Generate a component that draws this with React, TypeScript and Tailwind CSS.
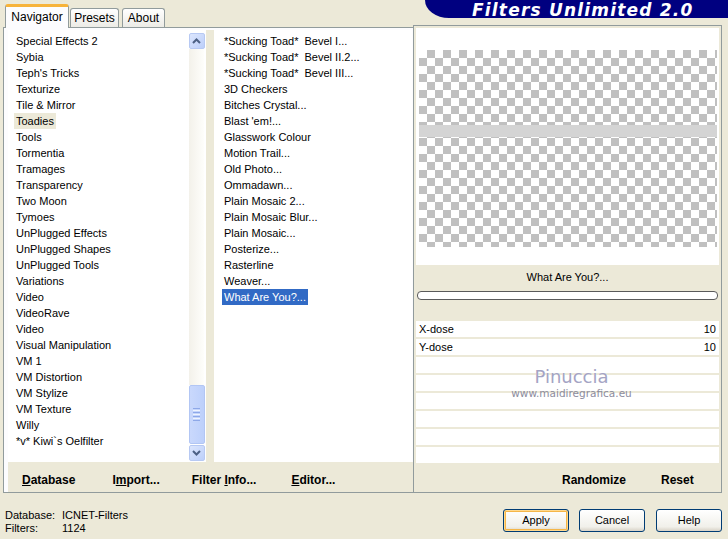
import React from "react";

const leftItems = [
  "Special Effects 2",
  "Sybia",
  "Teph's Tricks",
  "Texturize",
  "Tile & Mirror",
  "Toadies",
  "Tools",
  "Tormentia",
  "Tramages",
  "Transparency",
  "Two Moon",
  "Tymoes",
  "UnPlugged Effects",
  "UnPlugged Shapes",
  "UnPlugged Tools",
  "Variations",
  "Video",
  "VideoRave",
  "Video",
  "Visual Manipulation",
  "VM 1",
  "VM Distortion",
  "VM Stylize",
  "VM Texture",
  "Willy",
  "*v* Kiwi`s Oelfilter",
];

const midItems = [
  "*Sucking Toad*  Bevel I...",
  "*Sucking Toad*  Bevel II.2...",
  "*Sucking Toad*  Bevel III...",
  "3D Checkers",
  "Bitches Crystal...",
  "Blast 'em!...",
  "Glasswork Colour",
  "Motion Trail...",
  "Old Photo...",
  "Ommadawn...",
  "Plain Mosaic 2...",
  "Plain Mosaic Blur...",
  "Plain Mosaic...",
  "Posterize...",
  "Rasterline",
  "Weaver...",
  "What Are You?...",
];

const params: [string, string][] = [
  ["X-dose", "10"],
  ["Y-dose", "10"],
  ["", ""],
  ["", ""],
  ["", ""],
  ["", ""],
  ["", ""],
  ["", ""],
];

function Chevron({ up }: { up: boolean }) {
  return (
    <svg width="9" height="6" viewBox="0 0 9 6">
      <path
        d={up ? "M1 5 L4.5 1.5 L8 5" : "M1 1 L4.5 4.5 L8 1"}
        fill="none"
        stroke="#4D6185"
        strokeWidth="2"
      />
    </svg>
  );
}

function ScrollButton({ up }: { up: boolean }) {
  return (
    <div className="h-[16px] w-[16px] mx-auto flex items-center justify-center rounded-[2px] border border-[#B7C9F3] bg-[linear-gradient(135deg,#DCE6FD,#BCCFFA)]">
      <Chevron up={up} />
    </div>
  );
}

function XPButton({ label, def }: { label: string; def?: boolean }) {
  return (
    <div
      className={
        "w-[66px] h-[23px] flex items-center justify-center rounded-[3px] border border-[#003C74] bg-[linear-gradient(180deg,#FFFFFF,#F1F0EA_80%,#D8D2C6)] text-[11px] " +
        (def ? "shadow-[inset_0_0_0_1px_#FFD98F,inset_0_0_0_2px_#F5B649]" : "")
      }
    >
      {label}
    </div>
  );
}

export default function App() {
  return (
    <div className="w-[728px] h-[539px] bg-[#ECE9D8] font-['Liberation_Sans',Arial,sans-serif] text-[11px] text-black overflow-hidden flex flex-col">
      {/* top strip */}
      <div className="h-[27px] flex justify-between shrink-0">
        <div className="flex items-end pl-[5px]">
          <div className="relative z-10 -mb-[1px] h-[24px] w-[64px] flex items-center justify-center rounded-t-[3px] border-x border-[#919B9C] border-t-[3px] border-t-[#F7B33A] bg-[#FCFCFE] text-[12px] pb-[1px]">
            Navigator
          </div>
          <div className="ml-[1px] h-[19px] w-[49px] flex items-center justify-center rounded-t-[3px] border border-b-0 border-[#919B9C] bg-[linear-gradient(180deg,#FFFFFF,#ECEBE6)] text-[12px]">
            Presets
          </div>
          <div className="ml-[3px] h-[19px] w-[43px] flex items-center justify-center rounded-t-[3px] border border-b-0 border-[#919B9C] bg-[linear-gradient(180deg,#FFFFFF,#ECEBE6)] text-[12px]">
            About
          </div>
        </div>
        <div className="w-[303px] h-[18px] bg-[#000080] rounded-bl-[24px_18px] pl-[47px] pt-[1px] flex items-center font-['DejaVu_Sans',sans-serif] font-bold italic text-[17px] leading-[16px] tracking-[1.2px] text-white whitespace-nowrap">
          Filters Unlimited 2.0
        </div>
      </div>

      {/* main area */}
      <div className="h-[466px] flex pl-[3px] shrink-0">
        {/* left panel */}
        <div className="w-[411px] h-[466px] border border-[#919B9C] bg-[#FCFCFE] flex flex-col">
          <div className="h-[432px] mt-[2px] flex pl-[4px]">
            <div className="w-[180px] bg-white pt-[3px]">
              {leftItems.map((t, i) => (
                <div key={i} className="h-[16px] leading-[16px] flex">
                  <span
                    className={
                      "ml-[6px] px-[2px] whitespace-pre " +
                      (t === "Toadies" ? "bg-[#ECE9D8]" : "")
                    }
                  >
                    {t}
                  </span>
                </div>
              ))}
            </div>
            <div className="w-[18px] bg-white pt-[3px] pb-[1px] flex flex-col pr-[1px]">
              <ScrollButton up />
              <div className="flex-1 mx-[1px] bg-[linear-gradient(90deg,#F3F1EA,#FEFEFB)]" />
              <div className="h-[59px] w-[16px] mx-auto rounded-[2px] border border-[#B2C6F4] bg-[linear-gradient(90deg,#C9D8FC,#BDD0FB)] flex flex-col items-center justify-center gap-[1px]">
                <div className="w-[7px] h-[1px] bg-[#8EA8E8]" />
                <div className="w-[7px] h-[1px] bg-[#EEF3FE]" />
                <div className="w-[7px] h-[1px] bg-[#8EA8E8]" />
                <div className="w-[7px] h-[1px] bg-[#EEF3FE]" />
                <div className="w-[7px] h-[1px] bg-[#8EA8E8]" />
                <div className="w-[7px] h-[1px] bg-[#EEF3FE]" />
                <div className="w-[7px] h-[1px] bg-[#8EA8E8]" />
              </div>
              <div className="h-[1px]" />
              <ScrollButton up={false} />
            </div>
            <div className="w-[8px] bg-[#ECE9D8]" />
            <div className="w-[198px] bg-white pt-[3px]">
              {midItems.map((t, i) => (
                <div key={i} className="h-[16px] leading-[16px] flex">
                  <span
                    className={
                      "ml-[8px] px-[2px] whitespace-pre " +
                      (t === "What Are You?..." ? "bg-[#316AC5] text-white" : "")
                    }
                  >
                    {t}
                  </span>
                </div>
              ))}
            </div>
          </div>
          <div className="h-[30px] ml-[4px] bg-[#ECE9D8] flex items-center font-bold text-[12px] pt-[5px]">
            <span className="ml-[14px]">
              <span className="underline">D</span>atabase
            </span>
            <span className="ml-[37px]">
              I<span className="underline">m</span>port...
            </span>
            <span className="ml-[32px]">
              Filter <span className="underline">I</span>nfo...
            </span>
            <span className="ml-[35px]">
              <span className="underline">E</span>ditor...
            </span>
          </div>
        </div>

        {/* right panel */}
        <div className="relative w-[309px] h-[468px] -mt-[2px] -ml-[1px] border border-[#919B9C] bg-[#ECE9D8] flex flex-col px-[2px] pt-[2px]">
          <div className="h-[237px] bg-white pt-[22px] pl-[3px] pr-[2px]">
            <div className="relative h-[197px] bg-[conic-gradient(#C0C0C0_25%,#FFFFFF_0_50%,#C0C0C0_0_75%,#FFFFFF_0)] bg-[length:16px_16px]">
              <div className="absolute left-0 right-0 top-[75px] h-[12px] bg-[#D4D4D4]" />
            </div>
          </div>
          <div className="h-[56px] flex flex-col items-center pt-[5px]">
            <div className="h-[14px] leading-[14px]">What Are You?...</div>
            <div className="mt-[7px] self-stretch mx-[1px] h-[9px] rounded-[4px] border border-[#5A5A5A] bg-white" />
          </div>
          <div className="flex flex-col gap-[2px]">
            {params.map(([k, v], i) => (
              <div
                key={i}
                className="h-[16px] leading-[16px] bg-white flex justify-between pl-[3px] pr-[3px]"
              >
                <span>{k}</span>
                <span>{v}</span>
              </div>
            ))}
          </div>
          <div className="flex-1 flex items-center font-bold text-[12px] pt-[5px]">
            <span className="ml-[146px]">Randomize</span>
            <span className="ml-[35px]">Reset</span>
          </div>
          {/* watermark */}
          <div className="absolute left-0 right-0 top-[341px] flex flex-col items-center pointer-events-none">
            <div className="font-['DejaVu_Sans',sans-serif] text-[18px] leading-[20px] text-[#A4A4C4] [text-shadow:0_0_1px_#fff] pl-[8px]">
              Pinuccia
            </div>
            <div className="font-['DejaVu_Sans',sans-serif] text-[10.5px] leading-[12px] text-[#8C8C9E] pl-[8px]">
              www.maidiregrafica.eu
            </div>
          </div>
        </div>
      </div>

      {/* status + buttons */}
      <div className="flex-1 flex justify-between pt-[16px] pl-[5px] pr-[6px]">
        <div className="flex flex-col leading-[13px]">
          <div className="flex">
            <span className="w-[57px]">Database:</span>
            <span>ICNET-Filters</span>
          </div>
          <div className="flex">
            <span className="w-[57px]">Filters:</span>
            <span>1124</span>
          </div>
        </div>
        <div className="flex">
          <XPButton label="Apply" def />
          <div className="w-[10px]" />
          <XPButton label="Cancel" />
          <div className="w-[11px]" />
          <XPButton label="Help" />
        </div>
      </div>
    </div>
  );
}
